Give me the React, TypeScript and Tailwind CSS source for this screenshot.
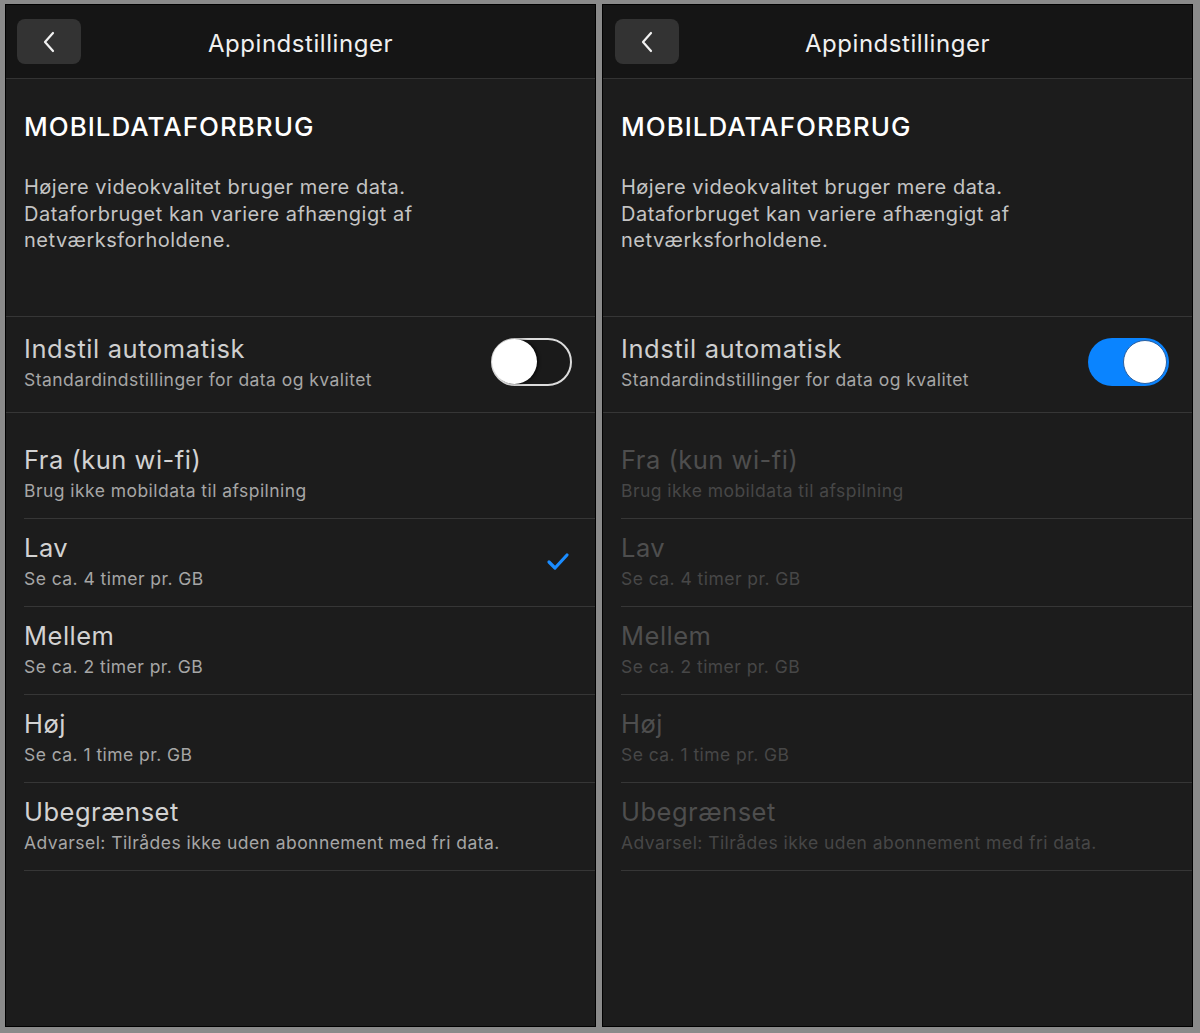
import React from "react";

type Item = { title: string; sub: string; checked?: boolean };

const items: Item[] = [
  { title: "Fra (kun wi-fi)", sub: "Brug ikke mobildata til afspilning" },
  { title: "Lav", sub: "Se ca. 4 timer pr. GB", checked: true },
  { title: "Mellem", sub: "Se ca. 2 timer pr. GB" },
  { title: "Høj", sub: "Se ca. 1 time pr. GB" },
  { title: "Ubegrænset", sub: "Advarsel: Tilrådes ikke uden abonnement med fri data." },
];

function Chevron() {
  return (
    <svg width="14" height="24" viewBox="0 0 14 24" fill="none">
      <path d="M11 3 L3 12 L11 21" stroke="#f2f2f2" strokeWidth="2.2" strokeLinecap="round" strokeLinejoin="round" />
    </svg>
  );
}

function Check() {
  return (
    <svg width="24" height="20" viewBox="0 0 24 20" fill="none">
      <path d="M3 11 L9 17 L21 4" stroke="#1a8cff" strokeWidth="3.2" strokeLinecap="round" strokeLinejoin="round" />
    </svg>
  );
}

function Toggle({ on }: { on: boolean }) {
  if (on) {
    return (
      <div className="w-[81px] h-[48px] rounded-full bg-[#0a84ff] flex items-center justify-end p-[2px] shrink-0">
        <div className="w-[44px] h-[44px] rounded-full bg-white border border-[#2a5fa0]" />
      </div>
    );
  }
  return (
    <div className="w-[81px] h-[48px] rounded-full bg-[#1a1a1a] border-2 border-[#dcdcdc] flex items-center justify-start shrink-0">
      <div className="w-[45px] h-[45px] -ml-[1px] rounded-full bg-white shadow-[2px_0_3px_rgba(0,0,0,0.6)]" />
    </div>
  );
}

function Panel({ enabled }: { enabled: boolean }) {
  const titleColor = enabled ? "text-[#d2d2d2]" : "text-[#4e4e4e]";
  const subColor = enabled ? "text-[#a6a6a6]" : "text-[#474747]";
  return (
    <div className="w-[591px] h-[1023px] border border-black bg-[#1c1c1c] flex flex-col overflow-hidden">
      <div className="h-[74px] bg-[#151515] border-b border-[#333333] flex items-center relative shrink-0">
        <div className={`${enabled ? "ml-[11px]" : "ml-[12px]"} w-[64px] h-[45px] rounded-lg bg-[#333333] flex items-center justify-center`}>
          <Chevron />
        </div>
        <div className="absolute inset-0 pt-[5px] flex items-center justify-center pointer-events-none">
          <span className="text-[24px] text-[#f0f0f0] tracking-[0.55px]">Appindstillinger</span>
        </div>
      </div>

      <div className="px-[18px] pt-[32px] pb-[62px] border-b border-[#363636]">
        <div className="text-[26px] leading-[32px] font-medium text-white tracking-[1px]">MOBILDATAFORBRUG</div>
        <div className="mt-[31px] text-[20px] leading-[26.5px] text-[#c4c4c4] tracking-[0.5px] w-[440px]">
          Højere videokvalitet bruger mere data. Dataforbruget kan variere afhængigt af netværksforholdene.
        </div>
      </div>

      <div className="pl-[18px] pr-[23px] pt-[16px] pb-[21px] border-b border-[#363636] flex items-center">
        <div className="flex-1 flex flex-col">
          <div className="text-[25.5px] leading-[32px] text-[#cfcfcf] tracking-[0.6px]">Indstil automatisk</div>
          <div className="mt-[4px] text-[17.5px] leading-[22px] text-[#a6a6a6] tracking-[0.45px]">Standardindstillinger for data og kvalitet</div>
        </div>
        <Toggle on={!enabled} />
      </div>

      <div className="pt-[18px] pl-[18px]">
        {items.map((it) => (
          <div key={it.title} className="border-b border-[#363636] pt-[14px] pb-[16px] pr-[25px] flex items-center">
            <div className="flex-1 flex flex-col">
              <div className={`text-[25.5px] leading-[30px] tracking-[0.5px] ${titleColor}`}>{it.title}</div>
              <div className={`mt-[5px] text-[17.5px] leading-[22px] tracking-[0.45px] ${subColor}`}>{it.sub}</div>
            </div>
            {enabled && it.checked ? <Check /> : null}
          </div>
        ))}
      </div>
    </div>
  );
}

export default function App() {
  return (
    <div
      className="w-[1200px] h-[1033px] bg-[#8a8a8a] flex items-start pl-[5px] pt-[4px] gap-[6px]"
      style={{ fontFamily: "Inter, 'Noto Sans', sans-serif" }}
    >
      <Panel enabled={true} />
      <Panel enabled={false} />
    </div>
  );
}
